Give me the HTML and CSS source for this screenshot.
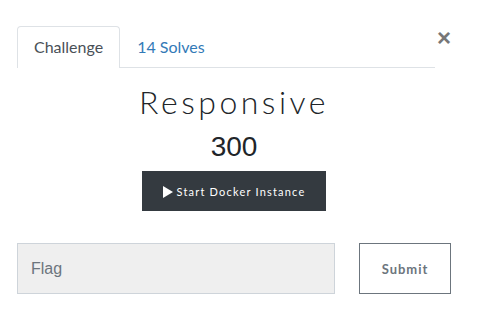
FILE: index.html
```html
<!DOCTYPE html>
<html lang="en">
<head>
  <meta charset="UTF-8">
  <title>Responsive</title>
  <link rel="stylesheet" href="styles.css">
</head>
<body>
  <div class="modal">
    <div class="modal-head">
      <ul class="tabs">
        <li class="tab active">Challenge</li>
        <li class="tab">14 Solves</li>
      </ul>
      <span class="close">&times;</span>
    </div>
    <div class="challenge">
      <h2 class="name">Responsive</h2>
      <h3 class="value">300</h3>
      <button class="docker"><span class="play"></span>Start Docker Instance</button>
    </div>
    <form class="submit-row">
      <input type="text" class="flag" placeholder="Flag">
      <button type="button" class="btn-submit">Submit</button>
    </form>
  </div>
</body>
</html>
```

FILE: styles.css
```css
body {
  margin: 0;
  background: white;
  font-family: 'Lato', sans-serif;
}
.modal {
  width: 434px;
  margin-left: 17px;
  padding-top: 26px;
}
.modal-head {
  display: flex;
  align-items: flex-start;
}
.tabs {
  list-style: none;
  margin: 0;
  padding: 0;
  width: 420px;
  display: flex;
  border-bottom: 1px solid #dee2e6;
}
.tab {
  font-size: 16px;
  color: #337ab7;
  padding: 0 16px;
  height: 40px;
  line-height: 40px;
  border: 1px solid transparent;
  border-bottom: none;
  margin-bottom: -1px;
}
.tab.active {
  color: #495057;
  border-color: #dee2e6;
  border-radius: 4px 4px 0 0;
  background: white;
  height: 41px;
}
.close {
  margin-left: 2px;
  margin-top: 2px;
  font-size: 24px;
  font-weight: bold;
  line-height: 20px;
  color: #777;
  font-family: 'Liberation Sans', sans-serif;
}
.challenge {
  text-align: center;
}
.name {
  margin: 16px 0 0;
  font-family: 'Lato', sans-serif;
  font-weight: 300;
  font-size: 32px;
  letter-spacing: 3.5px;
  line-height: 36px;
  color: #212529;
}
.value {
  margin: 11px 0 0;
  font-family: 'Liberation Sans', sans-serif;
  font-weight: normal;
  font-size: 28px;
  line-height: 32px;
  color: #212529;
}
.docker {
  margin-top: 8px;
  width: 184px;
  height: 40px;
  border: none;
  background: #343a40;
  color: white;
  font-family: 'Lato', sans-serif;
  font-size: 11px;
  letter-spacing: 1.2px;
}
.play {
  display: inline-block;
  width: 0;
  height: 0;
  border-top: 6px solid transparent;
  border-bottom: 6px solid transparent;
  border-left: 10px solid white;
  margin-right: 4px;
  vertical-align: -2px;
}
.submit-row {
  display: flex;
  justify-content: space-between;
  margin-top: 32px;
}
.flag {
  width: 318px;
  height: 51px;
  box-sizing: border-box;
  background: #efefef;
  border: 1px solid #ced4da;
  padding: 0 13px;
  font-family: 'Liberation Sans', sans-serif;
  font-size: 16px;
  color: #495057;
}
.flag::placeholder {
  color: #6c757d;
}
.btn-submit {
  width: 92px;
  height: 51px;
  background: white;
  border: 1px solid #6c757d;
  color: #6c757d;
  font-family: 'Lato', sans-serif;
  font-weight: bold;
  font-size: 13px;
  letter-spacing: 1px;
}
```
